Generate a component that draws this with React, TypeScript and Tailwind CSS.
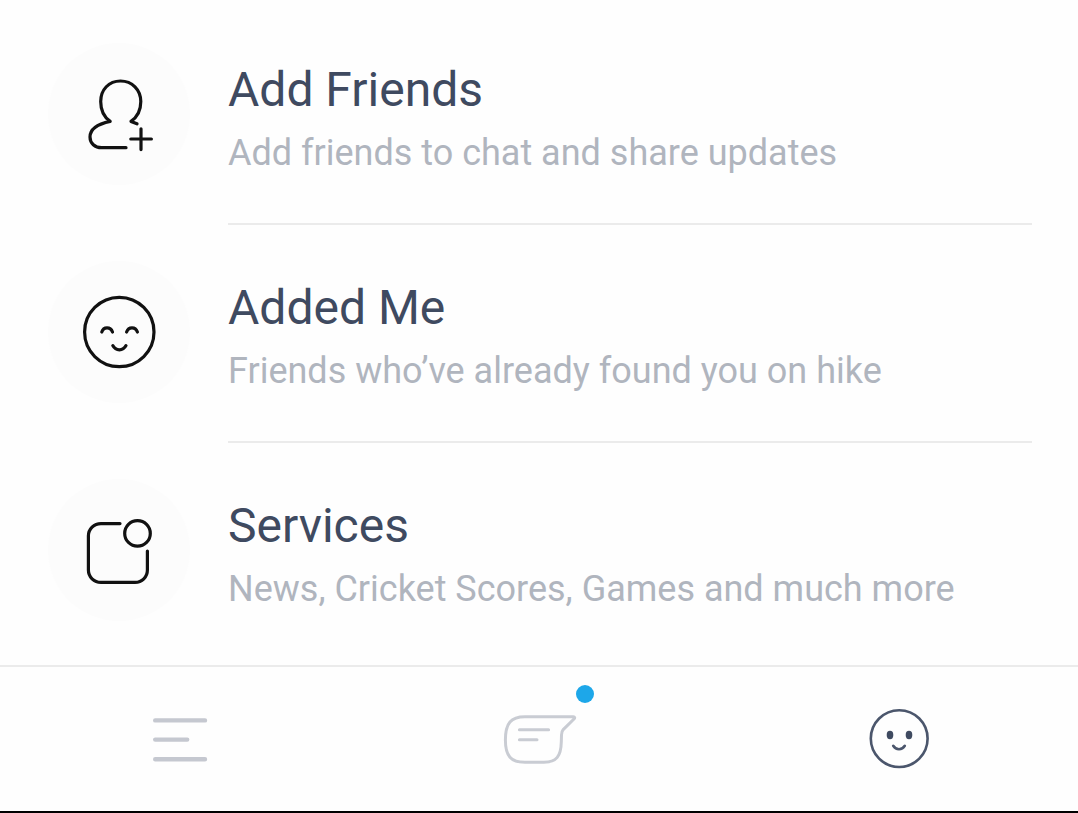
import React from "react";

const AddFriendIcon: React.FC = () => (
  <svg viewBox="0 0 142 142" className="size-full" fill="none" stroke="#111" strokeWidth="3.2" strokeLinecap="round" strokeLinejoin="round" aria-hidden="true">
    <path d="M89 80.8L83 78.4C89.2 74.2 92.8 67 92.8 58.6C92.8 46.5 84 38 72.5 38C61 38 52.7 46.5 52.7 58.6C52.7 67 56.2 74.4 62.2 78.4C50 81 42 86.5 42 94C42 100.4 47 104.7 53.5 104.7H78" />
    <path d="M82.8 96H103.4M93 85.8V106.6" />
  </svg>
);

const HappyIcon: React.FC = () => (
  <svg viewBox="0 0 142 142" className="size-full" fill="none" stroke="#111" strokeWidth="3.2" strokeLinecap="round" aria-hidden="true">
    <circle cx="71.3" cy="71" r="34.7" />
    <path d="M53.8 71C55.5 65.6 62.5 65.6 64.5 71M78.6 71C80.5 65.6 87.5 65.6 89.4 71" />
    <path d="M64.8 84.6C67.8 90.2 75 90.2 78 84.6" />
  </svg>
);

const ServicesIcon: React.FC = () => (
  <svg viewBox="0 0 142 142" className="size-full" fill="none" stroke="#111" strokeWidth="3.2" strokeLinecap="round" aria-hidden="true">
    <path d="M72 44.6H53C46 44.6 40.4 50 40.4 57V91C40.4 98 46 103.4 53 103.4H87C94 103.4 99.4 98 99.4 91V72" />
    <circle cx="89.5" cy="54.4" r="12.8" />
  </svg>
);

const TimelineIcon: React.FC = () => (
  <svg viewBox="0 0 72 72" className="size-full" fill="none" stroke="#c5c8d0" strokeWidth="4.4" strokeLinecap="round" aria-hidden="true">
    <path d="M11.2 17.4H61M11.2 36.6H43.2M11.2 56.2H61" />
  </svg>
);

const ChatIcon: React.FC = () => (
  <svg viewBox="0 0 72 72" className="size-full overflow-visible" fill="none" stroke="#c9ccd3" strokeWidth="3" strokeLinecap="round" strokeLinejoin="round" aria-hidden="true">
    <path d="M22 13.7H70.4C71.8 13.7 72 14.8 71.2 15.7L60.2 26.6C58.9 28 58.7 29.5 58.5 32L58.3 39C58 53 53.5 59.3 41 59.3H22C8 59.3 2.4 53 2.4 37C2.4 20 8 13.7 22 13.7Z" />
    <path d="M16.4 26.8H45.6M16.4 36.7H34" />
  </svg>
);

const ProfileIcon: React.FC = () => (
  <svg viewBox="0 0 72 72" className="size-full" fill="none" stroke="#4b566c" strokeWidth="2.6" strokeLinecap="round" aria-hidden="true">
    <circle cx="37.2" cy="35.6" r="28.4" />
    <path d="M31.2 42.8C34 47.4 40 47.4 42.8 42.8" />
    <ellipse cx="28" cy="32" rx="3.3" ry="4.2" fill="#3f4a60" stroke="none" />
    <ellipse cx="47" cy="32" rx="3.3" ry="4.2" fill="#3f4a60" stroke="none" />
  </svg>
);

const items = [
  { title: "Add Friends", text: "Add friends to chat and share updates", Icon: AddFriendIcon },
  { title: "Added Me", text: "Friends who’ve already found you on hike", Icon: HappyIcon },
  { title: "Services", text: "News, Cricket Scores, Games and much more", Icon: ServicesIcon },
];

const App: React.FC = () => {
  return (
    <div className="min-h-screen flex flex-col bg-[#fefefe] border-b-2 border-black font-['Roboto',sans-serif]">
      <main className="flex-1 pt-[7px]">
        <ul>
          {items.map(({ title, text, Icon }) => (
            <li key={title} className="group">
              <a href="#" className="flex gap-[38px] pl-12 pr-[46px]">
                <span className="mt-9 size-[142px] shrink-0 rounded-full bg-[#fcfcfc]">
                  <Icon />
                </span>
                <span className="flex-1 pt-[55px] pb-[49px] border-b-2 border-[#ebebeb] group-last:border-transparent">
                  <span className="block text-[48px] leading-[56px] text-[#3f4a60]">{title}</span>
                  <span className="mt-[14px] block text-[36px] leading-[42px] text-[#b0b5be]">{text}</span>
                </span>
              </a>
            </li>
          ))}
        </ul>
      </main>

      <nav className="grid grid-cols-3 h-[146px] border-t-2 border-[#ebebeb]">
        <button type="button" aria-label="Timeline" className="flex items-center justify-center">
          <span className="size-[72px]">
            <TimelineIcon />
          </span>
        </button>
        <button type="button" aria-label="Chats" className="flex items-center justify-center">
          <span className="relative size-[72px]">
            <ChatIcon />
            <span className="absolute -top-[18px] -right-[19px] size-[18px] rounded-full bg-[#1da7e9]" />
          </span>
        </button>
        <button type="button" aria-label="Me" className="flex items-center justify-center">
          <span className="size-[72px]">
            <ProfileIcon />
          </span>
        </button>
      </nav>
    </div>
  );
};

export default App;
